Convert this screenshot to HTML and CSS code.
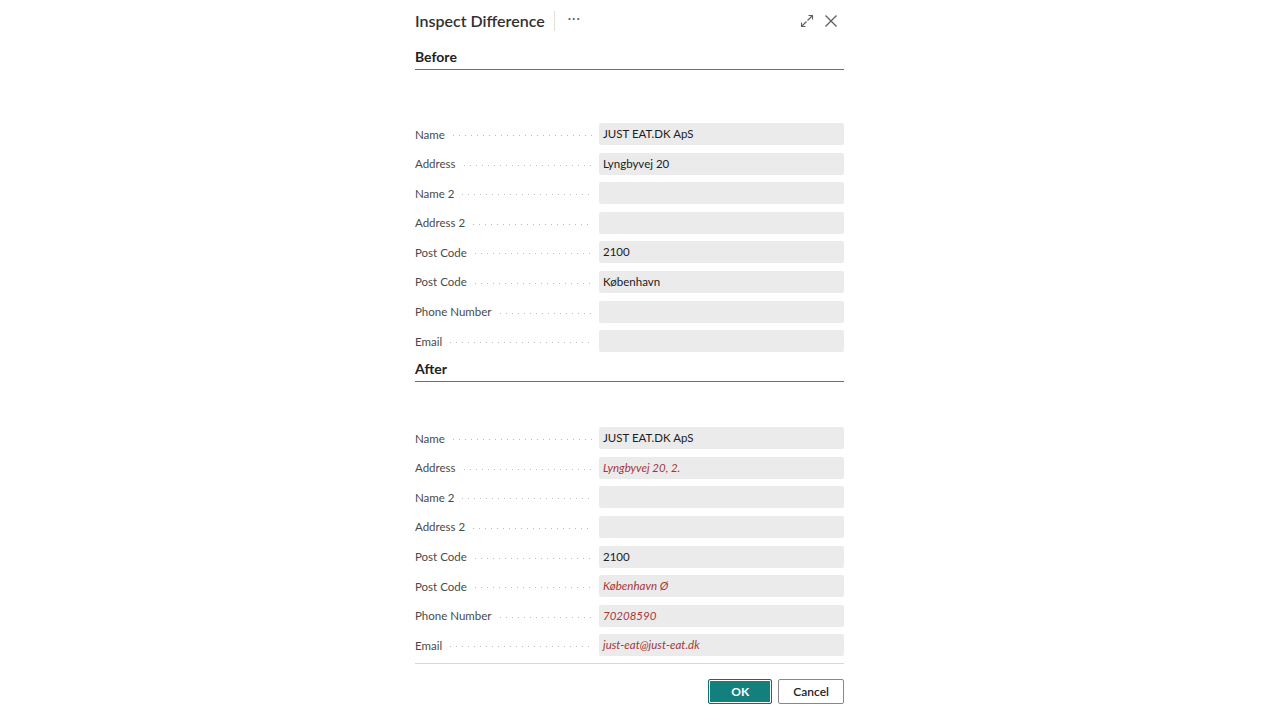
FILE: index.html
```html
<!DOCTYPE html>
<html lang="en">
<head>
  <meta charset="UTF-8">
  <meta name="viewport" content="width=device-width, initial-scale=1.0">
  <title>Inspect Difference</title>
  <link rel="stylesheet" href="styles.css">
</head>
<body>
  <div class="dialog">
    <div class="dialog-header">
      <h2 class="dialog-title">Inspect Difference</h2>
      <span class="title-sep"></span>
      <span class="more">&middot;&middot;&middot;</span>
      <div class="header-actions">
        <svg class="icon" width="16" height="16" viewBox="0 0 16 16" fill="none" stroke="#605e5c" stroke-width="1.1">
          <path d="M9.5 2.5h4v4M13.5 2.5l-5 5M6.5 13.5h-4v-4M2.5 13.5l5-5"/>
        </svg>
        <svg class="icon" width="16" height="16" viewBox="0 0 16 16" fill="none" stroke="#605e5c" stroke-width="1.3">
          <path d="M2.5 2.5l11 11M13.5 2.5l-11 11"/>
        </svg>
      </div>
    </div>

    <div class="section">
      <h3 class="section-title">Before</h3>
      <div class="fields fields-before">
        <div class="row"><span class="label">Name</span><span class="leader"></span><div class="value">JUST EAT.DK ApS</div></div>
        <div class="row"><span class="label">Address</span><span class="leader"></span><div class="value">Lyngbyvej 20</div></div>
        <div class="row"><span class="label">Name 2</span><span class="leader"></span><div class="value"></div></div>
        <div class="row"><span class="label">Address 2</span><span class="leader"></span><div class="value"></div></div>
        <div class="row"><span class="label">Post Code</span><span class="leader"></span><div class="value">2100</div></div>
        <div class="row"><span class="label">Post Code</span><span class="leader"></span><div class="value">København</div></div>
        <div class="row"><span class="label">Phone Number</span><span class="leader"></span><div class="value"></div></div>
        <div class="row"><span class="label">Email</span><span class="leader"></span><div class="value"></div></div>
      </div>
    </div>

    <div class="section section-after">
      <h3 class="section-title">After</h3>
      <div class="fields fields-after">
        <div class="row"><span class="label">Name</span><span class="leader"></span><div class="value">JUST EAT.DK ApS</div></div>
        <div class="row"><span class="label">Address</span><span class="leader"></span><div class="value changed">Lyngbyvej 20, 2.</div></div>
        <div class="row"><span class="label">Name 2</span><span class="leader"></span><div class="value"></div></div>
        <div class="row"><span class="label">Address 2</span><span class="leader"></span><div class="value"></div></div>
        <div class="row"><span class="label">Post Code</span><span class="leader"></span><div class="value">2100</div></div>
        <div class="row"><span class="label">Post Code</span><span class="leader"></span><div class="value changed">København Ø</div></div>
        <div class="row"><span class="label">Phone Number</span><span class="leader"></span><div class="value changed">70208590</div></div>
        <div class="row"><span class="label">Email</span><span class="leader"></span><div class="value changed">just-eat@just-eat.dk</div></div>
      </div>
    </div>

    <div class="dialog-footer">
      <button class="btn btn-primary">OK</button>
      <button class="btn">Cancel</button>
    </div>
  </div>
</body>
</html>
```

FILE: styles.css
```css
body {
  margin: 0;
  background: #ffffff;
  font-family: Lato, "Open Sans", Arial, sans-serif;
  color: #212121;
}
.dialog {
  width: 429px;
  margin-left: 415px;
}
.dialog-header {
  height: 41px;
  display: flex;
  align-items: center;
}
.dialog-title {
  margin: 0;
  font-size: 16px;
  font-weight: 600;
  color: #323130;
}
.title-sep {
  width: 1px;
  height: 20px;
  background: #e1dfdd;
  margin: 0 13px 0 9px;
}
.more {
  font-size: 13px;
  color: #605e5c;
  letter-spacing: 1px;
  position: relative;
  top: -3px;
}
.header-actions {
  margin-left: auto;
  margin-right: 5px;
  display: flex;
  align-items: center;
  gap: 8px;
}
.section-title {
  margin: 6px 0 0;
  height: 20px;
  line-height: 20px;
  padding-bottom: 2px;
  font-size: 14px;
  font-weight: 700;
  color: #212121;
  border-bottom: 1px solid #6b7080;
}
.fields {
  display: flex;
  flex-direction: column;
  gap: 7.6px;
}
.fields-before {
  margin-top: 53px;
}
.section-after .section-title {
  margin-top: 7px;
}
.fields-after {
  margin-top: 45px;
}
.row {
  display: flex;
  align-items: center;
  height: 22px;
}
.label {
  font-size: 11.5px;
  color: #4a4a4a;
  white-space: nowrap;
  padding-right: 8px;
}
.leader {
  flex: 1;
  height: 1px;
  margin-top: 3px;
  margin-right: 6px;
  background-image: linear-gradient(to right, #bdbdbd 1px, transparent 1px);
  background-size: 6px 1px;
  background-repeat: repeat-x;
}
.value {
  width: 237px;
  height: 22px;
  line-height: 22px;
  flex: none;
  background: #ebebec;
  border-radius: 2px;
  padding-left: 4px;
  padding-right: 4px;
  font-size: 11.5px;
  color: #212121;
}
.value.changed {
  color: #a4373a;
  font-style: italic;
}
.dialog-footer {
  margin-top: 7px;
  border-top: 1px solid #d8d8d8;
  padding-top: 15px;
  display: flex;
  justify-content: flex-end;
  gap: 6px;
}
.btn {
  height: 25px;
  min-width: 65px;
  padding: 0 14px;
  font-family: inherit;
  font-size: 12px;
  font-weight: 600;
  color: #212121;
  background: #ffffff;
  border: 1px solid #8a8886;
  border-radius: 2px;
}
.btn-primary {
  min-width: 64px;
  color: #ffffff;
  background: #13807e;
  border-color: #0d6e6c;
  box-shadow: inset 0 0 0 1px #ffffff;
  font-weight: 700;
}
```
